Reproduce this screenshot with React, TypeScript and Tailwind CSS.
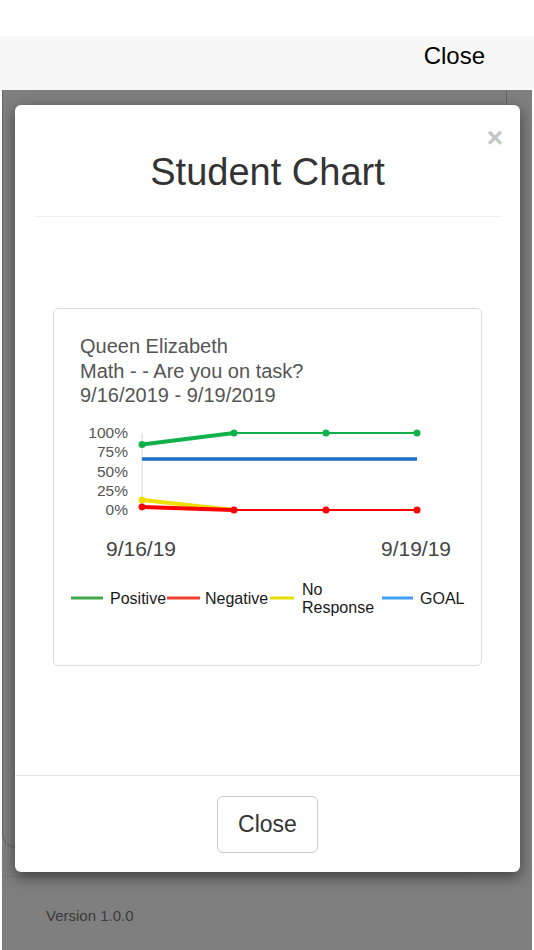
import React from 'react';

// chart geometry, px inside the svg
const xs = [88, 180, 272, 363];
const yOf = (v: number) => 90 - 0.77 * v;

const positive = [85, 100, 100, 100];
const negative = [4, 0, 0, 0];
const noResponse = [13, 0];

function Dots({ values, color }: { values: number[]; color: string }) {
  return (
    <>
      {values.map((v, i) => (
        <circle key={i} cx={xs[i]} cy={yOf(v)} r={3.5} fill={color} />
      ))}
    </>
  );
}

function StudentChart() {
  const axisFont = { fontFamily: '"Liberation Sans", Arial, sans-serif' };
  return (
    <svg width={427} height={200} className="block" style={axisFont}>
      {/* y axis labels */}
      {['100%', '75%', '50%', '25%', '0%'].map((t, i) => (
        <text key={t} x={74} y={18 + i * 19.3} textAnchor="end" fontSize={15.5} fill="#555">
          {t}
        </text>
      ))}
      <line x1={88} y1={13} x2={88} y2={90} stroke="#e6e6e6" strokeWidth={1.5} />

      {/* goal */}
      <line x1={88} y1={39} x2={363} y2={39} stroke="#1c6fc4" strokeWidth={3.5} />

      {/* positive */}
      <line x1={xs[0]} y1={yOf(positive[0])} x2={xs[1]} y2={yOf(positive[1])} stroke="#10b04a" strokeWidth={4} />
      <polyline
        points={xs.slice(1).map((x, i) => `${x},${yOf(positive[i + 1])}`).join(' ')}
        fill="none"
        stroke="#10b04a"
        strokeWidth={2}
      />
      <Dots values={positive} color="#10b04a" />

      {/* no response */}
      <line x1={xs[0]} y1={yOf(noResponse[0])} x2={xs[1]} y2={yOf(noResponse[1])} stroke="#ecdf00" strokeWidth={4} />
      <circle cx={xs[0]} cy={yOf(noResponse[0])} r={3.5} fill="#ecdf00" />

      {/* negative */}
      <line x1={xs[0]} y1={yOf(negative[0])} x2={xs[1]} y2={yOf(negative[1])} stroke="#ff0000" strokeWidth={4} />
      <polyline
        points={xs.slice(1).map((x, i) => `${x},${yOf(negative[i + 1])}`).join(' ')}
        fill="none"
        stroke="#ff0000"
        strokeWidth={2}
      />
      <Dots values={negative} color="#ff0000" />

      {/* x labels */}
      <text x={87} y={136} textAnchor="middle" fontSize={21} fill="#444">9/16/19</text>
      <text x={362} y={136} textAnchor="middle" fontSize={21} fill="#444">9/19/19</text>

      {/* legend */}
      <g fontSize={16} fill="#1a1a1a">
        <line x1={17} y1={178} x2={49} y2={178} stroke="#43a84a" strokeWidth={3} />
        <text x={56} y={184}>Positive</text>
        <line x1={113} y1={178} x2={146} y2={178} stroke="#f0412f" strokeWidth={3} />
        <text x={151} y={184}>Negative</text>
        <line x1={216} y1={178} x2={240} y2={178} stroke="#e6de00" strokeWidth={3} />
        <text x={248} y={175}>No</text>
        <text x={248} y={193}>Response</text>
        <line x1={328} y1={178} x2={359} y2={178} stroke="#42a0ee" strokeWidth={3} />
        <text x={366} y={184}>GOAL</text>
      </g>
    </svg>
  );
}

export default function App() {
  return (
    <div className="relative w-[534px] h-[950px] overflow-hidden bg-white font-['Liberation_Sans',Arial,sans-serif] text-[#333]">
      <div className="h-[36px]" />
      <div className="h-[54px] bg-[#f7f7f7] flex justify-end pr-[49px] pt-[5px] text-[24px] leading-[30px] text-black">
        Close
      </div>

      {/* page underneath the dialog */}
      <div className="pl-[2px]">
        <div className="h-[758px] w-[505px] rounded-bl-[15px] border-l border-b border-r border-[#ccc]" />
        <div className="mt-[28px] w-[465px] border-t border-[#eee]" />
        <div className="pl-[44px] pt-[28px] text-[15px] text-[#777]">Version 1.0.0</div>
      </div>

      {/* backdrop + modal */}
      <div className="absolute top-[90px] left-[2px] right-[2px] bottom-0 bg-black/50">
        <div className="relative mt-[15px] ml-[13px] w-[505px] rounded-[6px] bg-white shadow-[0_5px_15px_rgba(0,0,0,0.5)]">
          <button className="absolute top-[18px] right-[17px] text-[28px] font-bold leading-[30px] text-[#c4c4c4]">
            ×
          </button>
          <div className="px-[19px]">
            <div className="border-b border-[#eee] pt-[46px] pb-[24px] h-[112px] text-center text-[38px] leading-[42px] text-[#333]">
              Student Chart
            </div>
          </div>
          <div className="h-[558px] px-[38px] pt-[91px]">
            <div className="h-[358px] rounded-[5px] border border-[#ddd]">
              <div className="h-[111px] px-[26px] pt-[25px] text-[20px] leading-[24.5px] text-[#555]">
                <div>Queen Elizabeth</div>
                <div>Math - - Are you on task?</div>
                <div>9/16/2019 - 9/19/2019</div>
              </div>
              <StudentChart />
            </div>
          </div>
          <div className="h-[97px] border-t border-[#e5e5e5] flex items-start justify-center pt-[20px]">
            <button className="w-[101px] h-[57px] rounded-[6px] border border-[#ccc] bg-white text-[23px] text-[#333]">
              Close
            </button>
          </div>
        </div>
      </div>
    </div>
  );
}
